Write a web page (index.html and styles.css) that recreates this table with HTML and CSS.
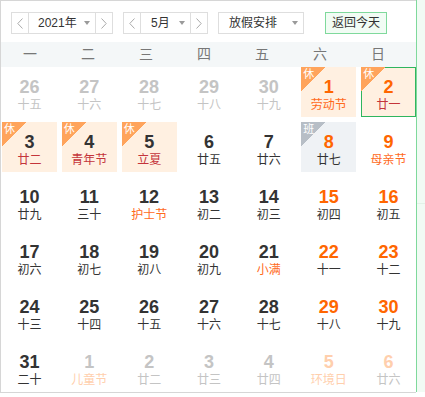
FILE: index.html
```html
<!DOCTYPE html>
<html lang="zh">
<head>
<meta charset="utf-8">
<link rel="stylesheet" href="styles.css">
</head>
<body>
<div class="wrap">
  <div class="cal">
    <div class="bar">
      <div class="ctl year">
        <span class="arr al"><svg width="6" height="11" viewBox="0 0 6 11"><polyline points="5.5,0.5 0.8,5.5 5.5,10.5" fill="none" stroke="#aaa" stroke-width="1"/></svg></span>
        <span class="mid"><span class="val">2021年</span><i class="caret"></i></span>
        <span class="arr ar"><svg width="6" height="11" viewBox="0 0 6 11"><polyline points="0.5,0.5 5.2,5.5 0.5,10.5" fill="none" stroke="#aaa" stroke-width="1"/></svg></span>
      </div>
      <div class="ctl month">
        <span class="arr al"><svg width="6" height="11" viewBox="0 0 6 11"><polyline points="5.5,0.5 0.8,5.5 5.5,10.5" fill="none" stroke="#aaa" stroke-width="1"/></svg></span>
        <span class="mid"><span class="val">5月</span><i class="caret"></i></span>
        <span class="arr ar"><svg width="6" height="11" viewBox="0 0 6 11"><polyline points="0.5,0.5 5.2,5.5 0.5,10.5" fill="none" stroke="#aaa" stroke-width="1"/></svg></span>
      </div>
      <div class="ctl sel"><span class="val">放假安排</span><i class="caret"></i></div>
      <div class="today-btn">返回今天</div>
    </div>
    <div class="week">
      <span>一</span><span>二</span><span>三</span><span>四</span><span>五</span><span>六</span><span>日</span>
    </div>
    <div class="days">
      <div class="d o"><b>26</b><em>十五</em></div>
      <div class="d o"><b>27</b><em>十六</em></div>
      <div class="d o"><b>28</b><em>十七</em></div>
      <div class="d o"><b>29</b><em>十八</em></div>
      <div class="d o"><b>30</b><em>十九</em></div>
      <div class="d we hol"><i class="tag">休</i><b>1</b><em class="fest">劳动节</em></div>
      <div class="d we hol cur"><i class="tag">休</i><b>2</b><em>廿一</em></div>

      <div class="d hol"><i class="tag">休</i><b>3</b><em>廿二</em></div>
      <div class="d hol"><i class="tag">休</i><b>4</b><em>青年节</em></div>
      <div class="d hol"><i class="tag">休</i><b>5</b><em>立夏</em></div>
      <div class="d"><b>6</b><em>廿五</em></div>
      <div class="d"><b>7</b><em>廿六</em></div>
      <div class="d we work"><i class="tag">班</i><b>8</b><em>廿七</em></div>
      <div class="d we"><b>9</b><em class="fest">母亲节</em></div>

      <div class="d"><b>10</b><em>廿九</em></div>
      <div class="d"><b>11</b><em>三十</em></div>
      <div class="d"><b>12</b><em class="fest">护士节</em></div>
      <div class="d"><b>13</b><em>初二</em></div>
      <div class="d"><b>14</b><em>初三</em></div>
      <div class="d we"><b>15</b><em>初四</em></div>
      <div class="d we"><b>16</b><em>初五</em></div>

      <div class="d"><b>17</b><em>初六</em></div>
      <div class="d"><b>18</b><em>初七</em></div>
      <div class="d"><b>19</b><em>初八</em></div>
      <div class="d"><b>20</b><em>初九</em></div>
      <div class="d"><b>21</b><em class="fest">小满</em></div>
      <div class="d we"><b>22</b><em>十一</em></div>
      <div class="d we"><b>23</b><em>十二</em></div>

      <div class="d"><b>24</b><em>十三</em></div>
      <div class="d"><b>25</b><em>十四</em></div>
      <div class="d"><b>26</b><em>十五</em></div>
      <div class="d"><b>27</b><em>十六</em></div>
      <div class="d"><b>28</b><em>十七</em></div>
      <div class="d we"><b>29</b><em>十八</em></div>
      <div class="d we"><b>30</b><em>十九</em></div>

      <div class="d"><b>31</b><em>二十</em></div>
      <div class="d o"><b>1</b><em class="fest">儿童节</em></div>
      <div class="d o"><b>2</b><em>廿二</em></div>
      <div class="d o"><b>3</b><em>廿三</em></div>
      <div class="d o"><b>4</b><em>廿四</em></div>
      <div class="d o we"><b>5</b><em class="fest">环境日</em></div>
      <div class="d o we"><b>6</b><em>廿六</em></div>
    </div>
  </div>
  <div class="side"><div class="side-top"></div></div>
</div>
</body>
</html>
```
FILE: styles.css
```css
html, body {
  margin: 0;
  padding: 0;
  background: #fff;
}
body {
  width: 425px;
  height: 397px;
  overflow: hidden;
  font-family: "Liberation Sans", Arial, "Noto Sans CJK SC", sans-serif;
  color: #333;
}
.wrap {
  display: flex;
  align-items: flex-start;
}
.cal {
  width: 416px;
  flex: none;
  box-sizing: border-box;
  border-top: 1px solid #d6d6d6;
  border-left: 1px solid #d6d6d6;
  border-bottom: 1px solid #d6d6d6;
}
.side {
  flex: 1;
  height: 392px;
  box-sizing: border-box;
  border-left: 1px solid #7fd99c;
  background: #f1fbf4;
}
.side-top {
  height: 203px;
  border-bottom: 1px solid #e2f2e7;
}
.bar {
  height: 41px;
  box-sizing: border-box;
  padding: 11px 0 0 10px;
  display: flex;
  align-items: flex-start;
  font-size: 12px;
}
.ctl {
  height: 22px;
  box-sizing: border-box;
  border: 1px solid #dedede;
  display: flex;
  align-items: stretch;
  margin-right: 10px;
  background: #fff;
}
.year { width: 102px; }
.month { width: 85px; }
.arr {
  width: 16px;
  display: flex;
  align-items: center;
  justify-content: center;
}
.al { border-right: 1px solid #dedede; }
.ar { border-left: 1px solid #dedede; }
.mid {
  flex: 1;
  display: flex;
  align-items: center;
  padding: 0 5px 0 9px;
}
.month .mid { padding-left: 10px; }
.val {
  line-height: 20px;
  color: #333;
}
.caret {
  margin-left: auto;
  width: 0;
  height: 0;
  border-left: 3.5px solid transparent;
  border-right: 3.5px solid transparent;
  border-top: 4px solid #9a9a9a;
}
.sel {
  width: 86px;
  align-items: center;
  padding: 0 5px 0 10px;
}
.today-btn {
  margin-left: 11px;
  width: 62px;
  height: 22px;
  box-sizing: border-box;
  border: 1px solid #7fd99c;
  background: #f1fcf4;
  text-align: center;
  line-height: 20px;
  color: #333;
}
.week {
  height: 25px;
  background: #f4f7f8;
  display: grid;
  grid-template-columns: repeat(7, 58px);
  align-items: center;
  font-size: 14px;
  color: #777;
}
.week span {
  text-align: center;
  line-height: 25px;
}
.days {
  display: grid;
  grid-template-columns: repeat(7, 1fr);
  grid-auto-rows: 50px;
  column-gap: 5px;
  row-gap: 5px;
  padding: 0 0 0 1px;
}
.d {
  position: relative;
  box-sizing: border-box;
  padding-top: 10px;
  text-align: center;
}
.d b {
  display: block;
  font-size: 18px;
  line-height: 20px;
  font-weight: bold;
  color: #333;
}
.d em {
  display: block;
  font-style: normal;
  font-size: 12px;
  line-height: 14px;
  margin-top: 1px;
  color: #333;
}
.d.we b { color: #ff6600; }
.d em.fest { color: #ff6a1c; }
.d.hol { background: #fff0e1; }
.d.hol em { color: #c4343a; }
.d.hol em.fest { color: #ff6a1c; }
.d.work { background: #eff2f5; }
.d.cur { border: 1px solid #2fb55e; padding-top: 9px; }
.tag {
  position: absolute;
  left: 0;
  top: 0;
  width: 24px;
  height: 25px;
  background: linear-gradient(to bottom right, #ffa45c 50%, transparent 50%);
  color: #fff;
  font-style: normal;
  font-size: 11px;
  line-height: 13px;
  text-align: left;
  padding: 1px 0 0 2px;
  box-sizing: border-box;
}
.cur .tag { left: -1px; top: -1px; }
.work .tag {
  background: linear-gradient(to bottom right, #b7bec6 50%, transparent 50%);
}
.d.o b { color: #c4c4c4; }
.d.o em { color: #c4c4c4; }
.d.o.we b { color: #ffcfad; }
.d.o em.fest { color: #ffcfad; }
```
